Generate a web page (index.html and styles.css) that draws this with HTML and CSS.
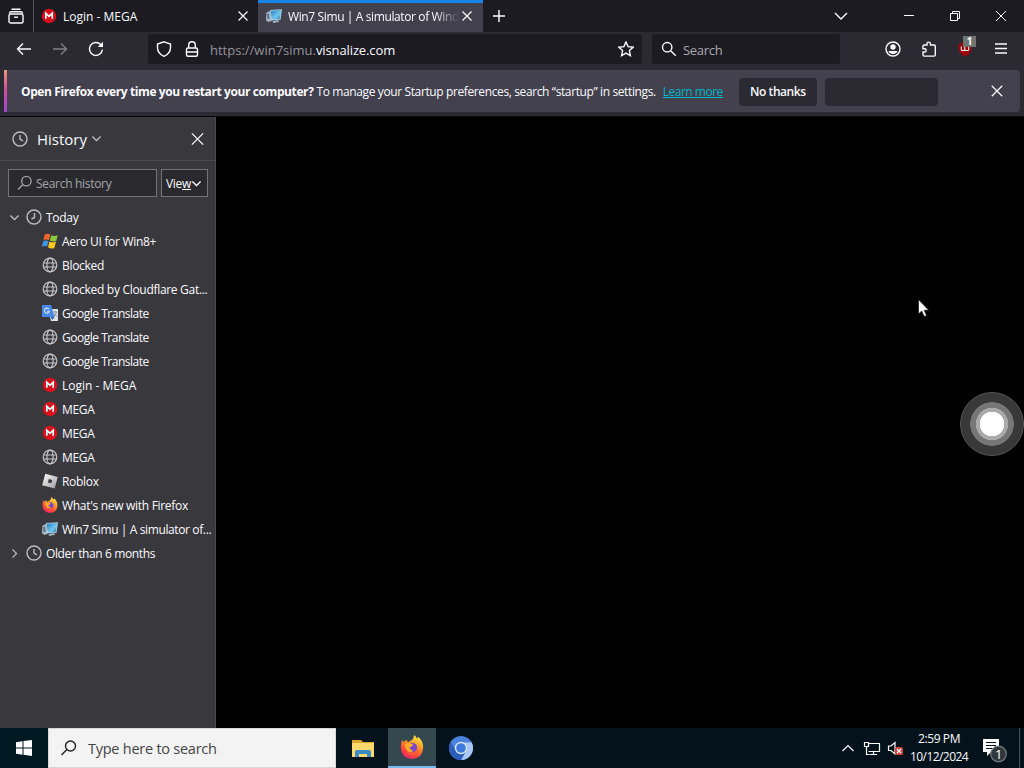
FILE: index.html
```html
<!DOCTYPE html>
<html lang="en">
<head>
  <meta charset="utf-8">
  <title>Win7 Simu</title>
  <link rel="stylesheet" href="styles.css">
</head>
<body>
  <svg class="sprite" width="0" height="0">
    <defs>
      <linearGradient id="fox" x1="0.8" y1="0" x2="0.3" y2="1">
        <stop offset="0" stop-color="#fff04a"/><stop offset=".4" stop-color="#ff9a25"/><stop offset=".75" stop-color="#ff4440"/><stop offset="1" stop-color="#e82268"/>
      </linearGradient>
      <linearGradient id="screen" x1="0" y1="0" x2="1" y2="1">
        <stop offset="0" stop-color="#1879bd"/><stop offset=".6" stop-color="#75c8ed"/><stop offset="1" stop-color="#2476b0"/>
      </linearGradient>
      <linearGradient id="metal" x1="0" y1="0" x2="1" y2="1">
        <stop offset="0" stop-color="#fff"/><stop offset="1" stop-color="#999"/>
      </linearGradient>
    </defs>
    <symbol id="close" viewBox="0 0 16 16"><path d="M3 3l10 10M13 3L3 13"/></symbol>
    <symbol id="close-big" viewBox="0 0 16 16"><path d="M2 2l12 12M14 2L2 14"/></symbol>
    <symbol id="down" viewBox="0 0 16 16"><path d="M2 5l6 6 6-6"/></symbol>
    <symbol id="clock" viewBox="0 0 16 16"><circle cx="8" cy="8" r="7"/><path d="M8 4v4.2l3 1.6"/></symbol>
    <symbol id="clock-back" viewBox="0 0 16 16"><circle cx="8" cy="8" r="7"/><path d="M8.5 4v4.5L5.5 10"/></symbol>
    <symbol id="lens" viewBox="0 0 16 16"><circle cx="6.2" cy="6.2" r="4.7"/><path d="M9.7 9.7l5 5"/></symbol>
    <symbol id="lens-left" viewBox="0 0 16 16"><circle cx="10" cy="6" r="5"/><path d="M6.4 9.6L1 15"/></symbol>
    <symbol id="globe" viewBox="0 0 16 16"><circle cx="8" cy="8" r="6.8"/><ellipse cx="8" cy="8" rx="3.1" ry="6.8"/><path d="M1.5 6h13M1.5 10h13"/></symbol>
    <symbol id="mega" viewBox="0 0 16 16"><circle cx="8" cy="8" r="7.2" fill="#d9101c" stroke="none"/><path d="M4.8 10.8V5.2L8 8.4l3.2-3.2v5.6" stroke="#fff" stroke-width="1.7"/></symbol>
    <symbol id="winflag" viewBox="0 0 16 16">
      <g stroke="none">
        <path d="M2.8 1.600q2.400-1.500 5.600 0L6.900 7q-2.900-1.200-5.500 0z" fill="#f0642d"/>
        <path d="M9.300 2.200q2.900 1.500 6.500 0L14.200 8q-3.200 1.200-6.400-.4z" fill="#8dc63f"/>
        <path d="M1.200 8q2.600-1.200 5.400 0l-1.500 5.600q-2.600-1.300-5.400 0z" fill="#3f94dc"/>
        <path d="M7.500 8.500q3.200 1.500 6.500.4l-1.700 6q-3.400 1.300-6.300-.7z" fill="#fcca1d"/>
      </g>
    </symbol>
    <symbol id="translate" viewBox="0 0 16 16">
      <g stroke="none"><path d="M6 4h10v12H9z" fill="#dfe3e7"/><path d="M0 0h9l3.700 12H0z" fill="#4887e8"/><path d="M9 12h3.700L10 15z" fill="#2456b8"/></g>
      <path d="M7 4.300A2.500 2.500 0 1 0 7.300 6.300H5" stroke="#d4e2fa" stroke-width="1.100"/><path d="M11 7h4M13 6v1M14.500 7q-.5 3-2.500 4M12 8.500l3 3" stroke="#6c7d87" stroke-width=".8"/>
    </symbol>
    <symbol id="roblox" viewBox="0 0 16 16"><path fill="url(#metal)" stroke="none" fill-rule="evenodd" d="M3.300.8L15.800 3.900 12.700 15.500.2 12.200zM6.800 6l-.9 3.400 3.400.9.9-3.400z"/></symbol>
    <symbol id="firefox" viewBox="0 0 24 24">
      <g stroke="none">
        <path fill="url(#fox)" d="M2.200 4.500q.4 2.100 1.500 2.600Q5 5.500 7 5q0 1.600 1.100 2.500Q10 5.800 12 5q2-2 2-5 2 1.400 3 3.600 1-.6 1.100-1.800 5.200 4.400 5.100 10.800Q22.500 23.500 12 24 1.400 23.500.8 12.800q0-4.800 1.400-8.300z"/>
        <circle cx="12.500" cy="12.500" r="4.600" fill="#7846c8"/>
        <path fill="#ffac25" d="M5 9q3-2 5.600-.4l2.700 1.200-2 1.900-1.800.8q.7 2.700 4.200 3-4.600 3.300-7.300-.6Q5 12.600 5 9z"/>
        <path fill="#f85a35" d="M5.500 13.500q1.500 4.400 6.500 4.400 4.200-.4 5.500-3.500.3 5.600-5 6.100-6.200-.1-7-7z"/>
      </g>
    </symbol>
    <symbol id="simu" viewBox="0 0 16 16">
      <g stroke="none"><path d="M.5 4.500L4 3l1.400 10-3.300 1L0 12z" fill="#a9bac4"/><path d="M1 6l2-.7.7 5.700-2.400.3z" fill="#607b8c"/><path d="M4 2l12-.8-1.500 10.600-9.700.8z" fill="#b5d3e3"/><path d="M4.700 2.700l10.400-.8-1.300 9-8 .7z" fill="url(#screen)"/><path d="M7 13l5-.8 1.300 1.600-6.500 1.100z" fill="#a5bac7"/></g>
    </symbol>
  </svg>

  <div class="desktop">
    <header class="tabs">
      <div class="firefox-view"><svg class="icon" viewBox="0 0 16 16"><path d="M3.500 1.200h9M1.500 5.500q0-1.800 1.800-1.800h9.400q1.800 0 1.800 1.800"/><rect x="1" y="6" width="14" height="9" rx="1.800"/><path d="M6 9.200h4"/></svg></div>
      <div class="tab">
        <svg class="icon"><use href="#mega"/></svg>
        <span class="tab-title login">Login - MEGA</span>
        <svg class="icon tab-close"><use href="#close-big"/></svg>
      </div>
      <div class="tab active">
        <svg class="icon"><use href="#simu"/></svg>
        <span class="tab-title faded">Win7 Simu | A simulator of Wind</span>
        <svg class="icon tab-close"><use href="#close-big"/></svg>
      </div>
      <svg class="icon new-tab" viewBox="0 0 16 16"><path d="M8 2v12M2 8h12"/></svg>
      <div class="window-buttons">
        <svg class="icon list-tabs"><use href="#down"/></svg>
        <svg class="icon thin" viewBox="0 0 16 16"><path d="M3 7.500h10"/></svg>
        <svg class="icon thin" viewBox="0 0 16 16"><path d="M3.500 5.500h7v7h-7zM5.500 5V3.500h7v7H11"/></svg>
        <svg class="icon thin"><use href="#close"/></svg>
      </div>
    </header>

    <nav class="toolbar">
      <div class="nav-buttons">
        <svg class="icon" viewBox="0 0 16 16"><path d="M15 8H1.500M7 2.500L1.500 8 7 13.500"/></svg>
        <svg class="icon disabled" viewBox="0 0 16 16"><path d="M1 8h13.500M9 2.500L14.500 8 9 13.500"/></svg>
        <svg class="icon" viewBox="0 0 16 16"><path d="M14.400 8.700A6.500 6.500 0 1 1 12.600 3.400L14 4.900"/><path d="M15 .8V6h-5.200z" fill="#fbfbfe" stroke="none"/></svg>
      </div>
      <div class="urlbar">
        <svg class="icon" viewBox="0 0 16 16"><path d="M8 .8L14.500 3v3.500q0 6-6.500 8.800-6.500-2.800-6.500-8.800V3z"/></svg>
        <svg class="icon" viewBox="0 0 16 16"><rect x="2.500" y="7" width="11" height="8.200" rx="1.500"/><path d="M4.700 7V4a3.300 3.300 0 0 1 6.600 0v3M2.500 11h11"/></svg>
        <span class="url">https://win7simu.<b>visnalize.com</b></span>
        <svg class="icon star" viewBox="0 0 16 16"><path d="M8 1l2.100 4.600 5.100.6-3.800 3.400 1 5L8 12.100l-4.400 2.500 1-5L.8 6.200l5.100-.6z"/></svg>
      </div>
      <div class="searchbar"><svg class="icon"><use href="#lens"/></svg><span>Search</span></div>
      <div class="extensions">
        <svg class="icon" viewBox="0 0 16 16"><circle cx="8" cy="8" r="7"/><circle cx="8" cy="6" r="2.700" fill="#fbfbfe" stroke="none"/><path d="M3.400 10h9.200Q11.600 13 8 13t-4.600-3z" fill="#fbfbfe" stroke="none"/></svg>
        <svg class="icon" viewBox="0 0 16 16"><path d="M2 5.200q0-1.200 1.200-1.200H6V2.800a1.700 1.700 0 0 1 3.400 0V4H13q1.300 0 1.300 1.300v8.500q0 1.300-1.300 1.300H3.200Q2 15.100 2 13.800V11h1.600a1.600 1.600 0 0 0 0-3.200H2z"/></svg>
        <div class="ublock">
          <svg class="icon" viewBox="0 0 16 16"><path d="M8 .5l6.500 2.500v4.500q0 5-6.500 8-6.500-3-6.500-8V3z" fill="#98060c" stroke="none"/><path d="M4.300 5.500v3q0 1 1 1h1.400q1 0 1-1v-3M7.700 8.500q0 1 1 1h2q1 0 1-1v-3" stroke="#eee" stroke-width="1.100"/></svg>
          <span class="badge">1</span>
        </div>
        <svg class="icon" viewBox="0 0 16 16"><path d="M2 3h12M2 7.500h12M2 12h12"/></svg>
      </div>
    </nav>

    <div class="notice-wrap">
      <div class="notice">
        <strong>Open Firefox every time you restart your computer?</strong>
        <span class="message">To manage your Startup preferences, search “startup” in settings.</span>
        <a class="learn">Learn more</a>
        <div class="button">No thanks</div>
        <div class="button blank"></div>
        <svg class="icon dismiss"><use href="#close-big"/></svg>
      </div>
    </div>

    <main class="main">
      <aside class="sidebar">
        <div class="side-head">
          <svg class="icon muted"><use href="#clock"/></svg>
          <h1>History</h1>
          <svg class="icon small muted"><use href="#down"/></svg>
          <svg class="icon side-close"><use href="#close-big"/></svg>
        </div>
        <div class="side-search">
          <div class="search-history"><svg class="icon"><use href="#lens-left"/></svg><span>Search history</span></div>
          <div class="view"><span>Vie<u>w</u></span><svg class="icon small"><use href="#down"/></svg></div>
        </div>
        <ul class="history">
          <li class="group"><svg class="icon small muted"><use href="#down"/></svg><svg class="icon muted"><use href="#clock-back"/></svg><span>Today</span></li>
          <li><svg class="icon"><use href="#winflag"/></svg><span>Aero UI for Win8+</span></li>
          <li><svg class="icon globe"><use href="#globe"/></svg><span>Blocked</span></li>
          <li><svg class="icon globe"><use href="#globe"/></svg><span>Blocked by Cloudflare Gat...</span></li>
          <li><svg class="icon"><use href="#translate"/></svg><span class="google">Google Translate</span></li>
          <li><svg class="icon globe"><use href="#globe"/></svg><span class="google">Google Translate</span></li>
          <li><svg class="icon globe"><use href="#globe"/></svg><span class="google">Google Translate</span></li>
          <li><svg class="icon"><use href="#mega"/></svg><span class="login">Login - MEGA</span></li>
          <li><svg class="icon"><use href="#mega"/></svg><span>MEGA</span></li>
          <li><svg class="icon"><use href="#mega"/></svg><span>MEGA</span></li>
          <li><svg class="icon globe"><use href="#globe"/></svg><span>MEGA</span></li>
          <li><svg class="icon"><use href="#roblox"/></svg><span>Roblox</span></li>
          <li><svg class="icon"><use href="#firefox"/></svg><span>What's new with Firefox</span></li>
          <li><svg class="icon"><use href="#simu"/></svg><span class="tight">Win7 Simu | A simulator of...</span></li>
          <li class="group"><svg class="icon small muted turned"><use href="#down"/></svg><svg class="icon muted"><use href="#clock"/></svg><span class="tight">Older than 6 months</span></li>
        </ul>
      </aside>
      <div class="page"></div>
    </main>

    <footer class="taskbar">
      <div class="start"><svg width="16" height="16" viewBox="0 0 16 16"><path fill="#fff" d="M0 2.200L6.500 1.300v6.200H0zM7.500 1.100L16 0v7.500H7.500zM0 8.500h6.500v6.200L0 13.800zM7.500 8.500H16V16l-8.500-1.200z"/></svg></div>
      <div class="task-search"><svg class="icon"><use href="#lens-left"/></svg><span>Type here to search</span></div>
      <div class="app"><svg width="22" height="19" viewBox="0 0 22 19"><path fill="#dca52e" d="M0 1h9l2 2h11v15H0z"/><path fill="#f9d86c" d="M0 4h22v14H0z"/><path fill="#398cc4" d="M3 18v-5q0-2 2-2h12q2 0 2 2v5h-4v-3H7v3z"/></svg></div>
      <div class="app open"><svg width="24" height="24"><use href="#firefox"/></svg></div>
      <div class="app"><svg width="24" height="24" viewBox="0 0 24 24"><circle cx="12" cy="12" r="12" fill="#4a82dc"/><path fill="#a9c8f8" d="M12 6.500h10.700A12 12 0 0 1 12 24l5-9z"/><path fill="#2c5dba" d="M1.600 6A12 12 0 0 0 12 24l5-9H7z"/><circle cx="12" cy="12" r="6.200" fill="#dce9fc"/><circle cx="12" cy="12" r="4.800" fill="#3b79dd"/></svg></div>
      <div class="tray">
        <svg width="14" height="16" viewBox="0 0 14 16"><path d="M1.500 11L7 5.500l5.500 5.500"/></svg>
        <svg width="18" height="16" viewBox="0 0 18 16"><path d="M5 3.500h11.500v8H5.500M10.500 11.500v3M7 14.500h7M1.500 2.500h4v4h-4zM3.500 6.500v8h3"/></svg>
        <svg width="18" height="16" viewBox="0 0 18 16"><path d="M1.500 6v4.500H4l4 3.500V2.500L4 6z"/><rect x="8" y="7" width="8" height="8" rx="2" fill="#d84141" stroke="none"/><path d="M10 9l4 4M14 9l-4 4" stroke="#fff"/></svg>
        <div class="datetime"><span>2:59 PM</span><span class="date">10/12/2024</span></div>
        <svg class="action" width="26" height="26" viewBox="0 0 26 26"><path d="M1 1h16v13H9l-4 4v-4H1z" fill="#fff" stroke="none"/><path d="M4 4.500h10M4 7.500h10M4 10.500h6" stroke="#06121b"/><circle cx="16.500" cy="16" r="7.800" fill="#30383e" stroke="#747b80"/><text x="16.500" y="20.500" text-anchor="middle">1</text></svg>
        <div class="peek"></div>
      </div>
    </footer>

    <div class="touch"></div>
    <svg class="cursor" width="12" height="19" viewBox="0 0 12 19"><path d="M.5.500v14.500l3.200-3 2.500 5.500 2.400-1L6.200 11.200h4.500z" fill="#fff" stroke="#000" stroke-width=".6"/></svg>
  </div>
</body>
</html>
```
FILE: styles.css
```css
* {
  box-sizing: border-box;
}
body {
  margin: 0;
  background: #000;
  color: #fbfbfe;
  font: 12px "Open Sans", "Noto Sans", sans-serif;
  letter-spacing: -0.3px;
  overflow: hidden;
}
.sprite {
  position: absolute;
}
.desktop {
  position: relative;
  width: 1024px;
  height: 768px;
  display: flex;
  flex-direction: column;
}
.icon {
  width: 16px;
  height: 16px;
  flex: none;
  fill: none;
  stroke: #fbfbfe;
  stroke-width: 1.4;
}
.icon.small {
  width: 11px;
  height: 11px;
  stroke-width: 1.8;
}
.icon.muted {
  stroke: #bcbcc2;
}
span, strong, a {
  white-space: nowrap;
}
.login {
  letter-spacing: 0;
}
.google {
  letter-spacing: -0.48px;
}
.tight {
  letter-spacing: -0.38px;
}

/* tabs */
.tabs {
  height: 32px;
  flex: none;
  display: flex;
  align-items: center;
  background: #1c1b22;
}
.firefox-view {
  width: 34px;
  height: 32px;
  padding: 8px 0 0 8px;
  border-right: 1px solid #55545d;
}
.tab {
  width: 224px;
  height: 32px;
  display: flex;
  align-items: center;
  padding: 0 9px 0 7px;
}
.tab.active {
  width: 225px;
  background: #42414d;
  border-top: 3px solid #1683e8;
  padding: 0 10px 3px 8px;
}
.tab-title {
  margin-left: 6px;
}
.faded {
  letter-spacing: -0.38px;
  -webkit-mask-image: linear-gradient(to right, #000 86%, transparent);
  mask-image: linear-gradient(to right, #000 86%, transparent);
}
.tab-close {
  width: 12px;
  height: 12px;
  margin-left: auto;
  stroke-width: 1.6;
}
.new-tab {
  margin-left: 8px;
}
.window-buttons {
  margin-left: auto;
  margin-right: 15px;
  display: flex;
  gap: 30px;
}
.list-tabs {
  margin-right: 22px;
}
.icon.thin {
  stroke-width: 1;
}

/* toolbar */
.toolbar {
  height: 36px;
  flex: none;
  display: flex;
  align-items: center;
  padding-bottom: 2px;
  background: #2b2a33;
}
.nav-buttons {
  width: 148px;
  display: flex;
  gap: 20px;
  padding-left: 16px;
}
.disabled {
  opacity: 0.4;
}
.urlbar {
  width: 494px;
  height: 30px;
  display: flex;
  align-items: center;
  gap: 12px;
  padding: 0 8px;
  border-radius: 3px;
  background: #1c1b22;
  font-size: 13px;
}
.url {
  margin-left: -2px;
  padding-top: 2px;
  color: #94939b;
  letter-spacing: 0;
}
.url b {
  color: #fbfbfe;
  font-weight: normal;
  letter-spacing: -0.12px;
}
.star {
  margin-left: auto;
}
.searchbar {
  width: 188px;
  height: 30px;
  margin-left: 10px;
  display: flex;
  align-items: center;
  gap: 6px;
  padding-left: 9px;
  border-radius: 3px;
  background: #1c1b22;
  color: #aaa9b0;
  font-size: 13px;
}
.searchbar span {
  padding-top: 2px;
}
.extensions {
  display: flex;
  align-items: center;
  gap: 20px;
  margin-left: 45px;
}
.ublock {
  position: relative;
  display: flex;
}
.badge {
  position: absolute;
  left: 6px;
  top: -5px;
  width: 13px;
  height: 11px;
  background: #707574;
  font: bold 10px/11px "Open Sans", sans-serif;
  text-align: center;
}

/* startup notice */
.notice-wrap {
  height: 49px;
  flex: none;
  padding: 2px 4px 5px;
  background: #2b2a33;
  border-bottom: 1px solid #08080a;
}
.notice {
  height: 42px;
  display: flex;
  align-items: center;
  padding: 0 15px 0 14px;
  background: #42414d;
  border-top: 1px solid #54535e;
  border-radius: 4px;
  border-left: 3px solid;
  border-image: linear-gradient(#ef9a7c, #d35094 45%, #9845d1) 1;
  border-image-width: 0 0 0 3px;
}
.notice strong {
  letter-spacing: -0.4px;
}
.message {
  margin-left: 3px;
  letter-spacing: -0.38px;
}
.learn {
  margin-left: 7px;
  color: #00b5cc;
  letter-spacing: -0.5px;
  text-decoration: underline;
}
.button {
  width: 78px;
  height: 28px;
  margin-left: 16px;
  flex: none;
  background: #2b2a33;
  border-radius: 4px;
  font-weight: 600;
  letter-spacing: -0.45px;
  line-height: 28px;
  text-align: center;
}
.button.blank {
  width: 113px;
  margin-left: 8px;
}
.dismiss {
  width: 14px;
  height: 14px;
  margin: 0 1px 2px auto;
}

/* history sidebar */
.main {
  flex: 1;
  min-height: 0;
  display: flex;
}
.sidebar {
  width: 216px;
  background: #38383d;
  border-right: 1px solid #4a4a4f;
}
.side-head {
  height: 44px;
  display: flex;
  align-items: center;
  padding: 0 10px 0 12px;
  border-bottom: 1px solid #4a4a4f;
}
.side-head h1 {
  margin: 0 4px 0 9px;
  font-size: 15px;
  font-weight: normal;
  letter-spacing: 0;
}
.side-close {
  margin-left: auto;
  width: 15px;
}
.side-search {
  display: flex;
  gap: 4px;
  padding: 8px 7px 8px 8px;
}
.search-history, .view {
  height: 28px;
  display: flex;
  align-items: center;
  background: #2a2a2e;
  border: 1px solid #737378;
}
.search-history {
  width: 149px;
  gap: 4px;
  padding-left: 8px;
  color: #a5a5aa;
}
.search-history .icon {
  width: 15px;
  stroke: #a5a5aa;
}
.view {
  width: 47px;
  padding-left: 4px;
}
.history {
  list-style: none;
  margin: 0;
  padding: 0;
}
.history li {
  height: 24px;
  display: flex;
  align-items: center;
  gap: 4px;
  padding-left: 42px;
}
.history .group {
  padding-left: 9px;
}
.history .group .small {
  margin-right: 2px;
}
.icon.globe {
  stroke: #c5c5c9;
  stroke-width: 1.2;
}
.turned {
  transform: rotate(-90deg);
}
.page {
  flex: 1;
  background: #000;
}

/* taskbar */
.taskbar {
  height: 40px;
  flex: none;
  display: flex;
  background: #03121b;
  letter-spacing: -0.4px;
}
.start, .app {
  width: 48px;
  display: flex;
  align-items: center;
  justify-content: center;
}
.start {
  background: #001821;
}
.task-search {
  width: 288px;
  display: flex;
  align-items: center;
  gap: 11px;
  padding-left: 11px;
  border: 1px solid #d8d8d8;
  background: #f3f3f3;
  color: #444;
  font-size: 14.5px;
  letter-spacing: -0.25px;
}
.task-search .icon {
  width: 17px;
  stroke: #222;
}
.app {
  width: 49px;
  padding-left: 4px;
}
.app.open {
  width: 48px;
  padding: 0;
  margin-left: 3px;
  background: #354850;
  border-bottom: 2px solid #76b9ed;
}
.app.open + .app {
  width: 50px;
  padding: 0;
}
.tray {
  display: flex;
  align-items: center;
  margin-left: auto;
}
.tray svg {
  flex: none;
  fill: none;
  stroke: #fff;
  stroke-width: 1.2;
  margin-right: 8px;
}
.tray svg:nth-child(2) {
  margin-right: 6px;
}
.tray svg:nth-child(3) {
  margin-right: 5px;
}
.datetime {
  width: 58px;
  display: flex;
  flex-direction: column;
  align-items: center;
  line-height: 18px;
}
.date {
  letter-spacing: -0.55px;
}
.tray .action {
  margin: 5px 11px 0 14px;
}
.action text {
  fill: #fff;
  stroke: none;
  font-size: 13px;
}
.peek {
  width: 5px;
  height: 40px;
  border-left: 1px solid #46545b;
}

/* assistive touch button and mouse pointer, floating over the screen */
.touch {
  position: absolute;
  left: 960px;
  top: 392px;
  width: 64px;
  height: 64px;
  border: 1px solid #555;
  border-radius: 50%;
  background: radial-gradient(circle, #fff 0 12px, #aaa 12.5px 16px, #777 16.5px 21.5px, #383838 22px);
}
.cursor {
  position: absolute;
  left: 918px;
  top: 299px;
}
```
